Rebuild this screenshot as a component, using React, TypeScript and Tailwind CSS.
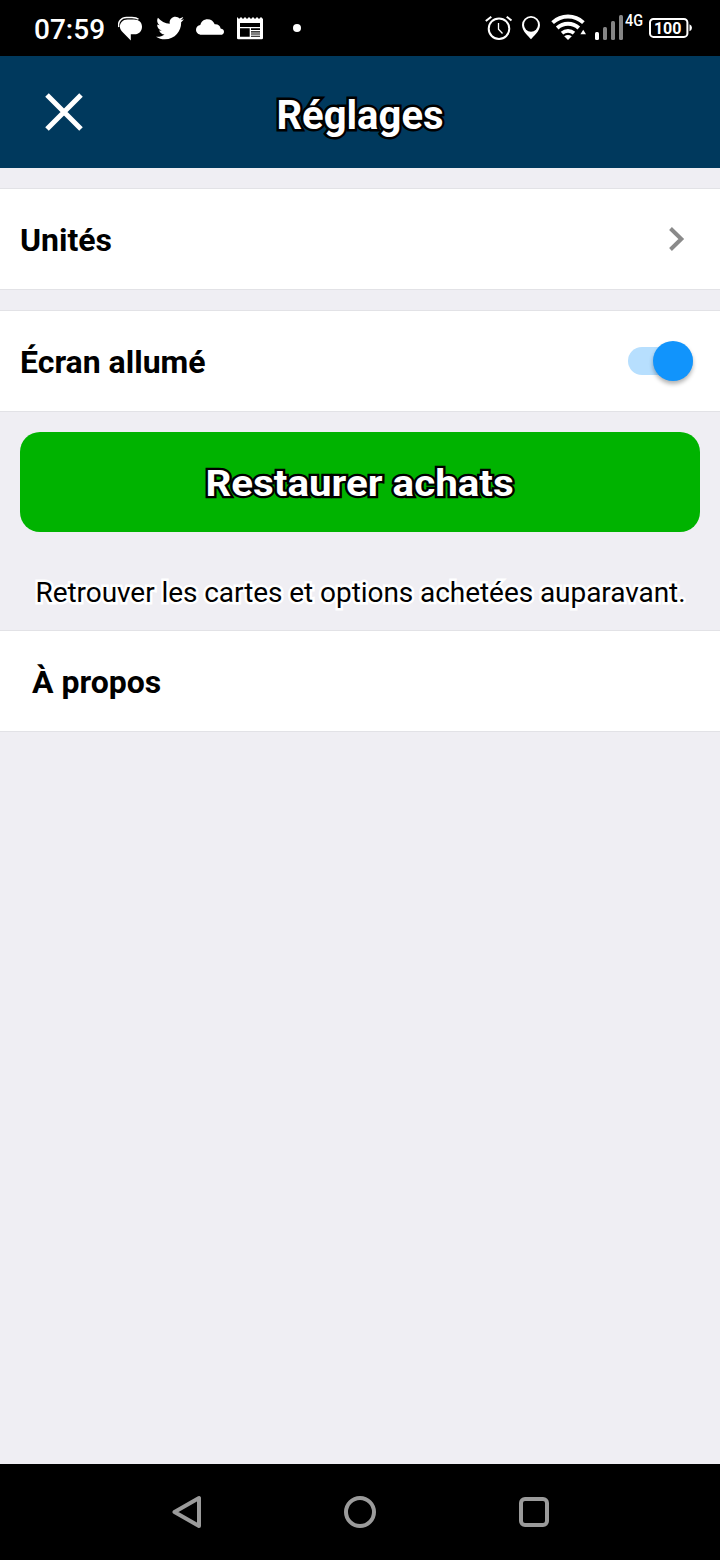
import type { ReactElement, ReactNode } from "react";
import { FaTwitter } from "react-icons/fa";

type RowProps = {
  label: string;
  className?: string;
  children?: ReactNode;
};

const StatusBar = (): ReactElement => {
  return (
    <div className="flex h-14 shrink-0 items-center bg-black text-white">
      <span className="ml-[34px] w-[84px] pt-[3px] text-[28px] leading-8 font-medium">
        07:59
      </span>
      {/* Messages */}
      <svg className="h-14 w-6 shrink-0" viewBox="118 0 24 56" fill="currentColor">
        <path d="M118.800 27C117.500 21.500 121.500 17.500 126.500 17.500H132C135.500 17.500 137 18 138.500 19.300" fill="none" stroke="currentColor" strokeWidth="1.500" />
        <path d="M127.500 19.500H134C139 19.500 142 22.500 142 26.700C142 31 139 34.300 134.500 34.300H130.800V40.500L122 31.600C117.500 27 120.500 19.500 127.500 19.500Z" />
      </svg>
      <FaTwitter className="ml-[14px] h-[28px] w-[28px] shrink-0" preserveAspectRatio="none" />
      {/* Cloud */}
      <svg className="ml-[12px] h-14 w-7 shrink-0" viewBox="196 0 28 56" fill="currentColor">
        <path d="M201.500 34.800C198.300 34.800 196 32.600 196 29.800C196 27.200 197.900 25.300 200.300 24.900C201.300 21.300 204 19.200 207.500 19.200C211 19.200 213.500 21 214.700 24.300C218 24 220.300 25.800 220.600 28.500C222.700 28.900 224 30 224 31.700C224 33.600 222.700 34.800 220.500 34.800Z" />
      </svg>
      {/* News */}
      <svg className="ml-[13px] h-14 w-[26px] shrink-0" viewBox="237 0 26 56">
        <path d="M237 17L239 19L241 17L243 19L245 17L247 19L249 17L251 19L253 17L255 19L257 17L259 19L261 17L263 19V38Q263 39.300 261.700 39.300H238.300Q237 39.300 237 38Z" fill="#fff" />
        <path d="M240 23H260V27H240ZM240 28.200H249.700V36.800H240ZM251 28.300H260V30H251ZM251 31.200H260V32.400H251ZM251 33.500H260V34.600H251ZM251 35.700H260V36.800H251Z" fill="#000" />
      </svg>
      <span className="ml-[30px] size-2 rounded-full bg-white" />

      <div className="mr-7 ml-auto flex items-center">
        {/* Alarm */}
        <svg className="h-14 w-7" viewBox="485 0 28 56" fill="none" stroke="currentColor">
          <circle cx="499" cy="28.700" r="10.300" strokeWidth="2" />
          <path d="M498.500 23V29.300L502.500 33.500" strokeWidth="1.300" />
          <path d="M485.800 21L491.300 16.700M506.700 16.700L511.500 20.500" strokeWidth="2" />
        </svg>
        {/* Location */}
        <svg className="ml-[9px] h-14 w-[18px]" viewBox="522 0 18 56">
          <path d="M531 39.300C529 36.500 522 31.500 522 25A9 9 0 0 1 540 25C540 31.500 533 36.500 531 39.300Z" fill="#fff" />
          <circle cx="531" cy="24.800" r="7" fill="#000" />
        </svg>
        {/* Wifi */}
        <svg className="ml-[11px] h-14 w-[35px]" viewBox="551 0 35 56" fill="none" stroke="currentColor" strokeWidth="3.800">
          <path d="M552.600 22.600A22.500 22.500 0 0 1 583.400 22.600" />
          <path d="M557.200 28A15.800 15.800 0 0 1 578.800 28" />
          <path d="M562 33.200A9 9 0 0 1 574 33.200" strokeWidth="3.600" />
          <path d="M568 40L564.200 36.200Q568 33.600 571.800 36.200Z" fill="currentColor" stroke="none" />
          <path d="M583.200 29.700L586 34.300H580.400Z" fill="currentColor" stroke="none" />
        </svg>
        {/* Mobile network */}
        <svg className="ml-[9px] h-14 w-[28px]" viewBox="595 0 28 56">
          <rect x="595" y="32" width="4" height="8" rx="1.500" fill="#fff" />
          <rect x="603" y="27" width="4" height="13" rx="1.500" fill="#858585" />
          <rect x="611" y="21" width="4" height="19" rx="1.500" fill="#858585" />
          <rect x="619" y="15" width="4" height="25" rx="1.500" fill="#858585" />
        </svg>
        <span className="mb-[17px] ml-[1.500px] w-[24.500px] origin-left scale-x-[0.85] text-[17px] leading-5 font-medium">
          4G
        </span>
        {/* Battery */}
        <svg className="h-14 w-[43px]" viewBox="649 0 43 56">
          <rect x="650" y="18.900" width="37.400" height="18" rx="3.500" fill="none" stroke="#fff" strokeWidth="2" />
          <path d="M689.500 24.300Q692 25.500 692 27.800Q692 30.200 689.500 31.300Z" fill="#fff" />
          <text x="667.700" y="34" fontSize="16" fontWeight="700" fill="#fff" textAnchor="middle">
            100
          </text>
        </svg>
      </div>
    </div>
  );
};

const Row = ({ label, className = "pl-5", children }: RowProps): ReactElement => {
  return (
    <div className={`flex h-[102px] items-center justify-between border-y border-[#e2e2e6] bg-white ${className}`}>
      <span className="pt-0.5 text-[32px] leading-10 font-bold">{label}</span>
      {children}
    </div>
  );
};

const Switch = (): ReactElement => {
  return (
    <button type="button" role="switch" aria-checked="true" className="mr-[27px] flex h-10 w-[65px] items-center">
      <span className="flex h-7 w-[65px] items-center justify-end rounded-full bg-[#b7dffe]">
        <span className="size-10 shrink-0 rounded-full bg-[#1194fc] shadow-[0_3px_4px_rgba(0,0,0,0.3)]" />
      </span>
    </button>
  );
};

const NavigationBar = (): ReactElement => {
  return (
    <div className="flex h-24 shrink-0 items-center gap-[142px] bg-black pl-[170px]">
      <svg className="h-9 w-8" viewBox="170 1494 32 36" fill="none" stroke="#9b9b9b" strokeWidth="4" strokeLinejoin="round">
        <path d="M199 1498V1526L174.500 1512Z" />
      </svg>
      <span className="size-8 rounded-full border-4 border-[#9b9b9b]" />
      <span className="ml-px size-[30px] rounded-[6px] border-4 border-[#9b9b9b]" />
    </div>
  );
};

const App = (): ReactElement => {
  return (
    <div className="flex h-[1560px] w-[720px] flex-col overflow-hidden bg-[#efeef3] font-[Roboto,sans-serif] text-black">
      <StatusBar />

      <header className="grid h-28 shrink-0 grid-cols-[128px_1fr_128px] items-center bg-[#00395d]">
        <button type="button" aria-label="Fermer" className="flex justify-center">
          <svg className="size-[38px]" viewBox="0 0 38 38" stroke="#fff" strokeWidth="5">
            <path d="M2 2L36 36M36 2L2 36" />
          </svg>
        </button>
        <h1 className="pt-2 text-center text-[40px] leading-12 font-bold text-white [-webkit-text-stroke:5px_#000] [paint-order:stroke_fill] [stroke-linejoin:round]">
          Réglages
        </h1>
      </header>

      <main className="flex flex-1 flex-col pt-5">
        <Row label="Unités">
          <svg className="mr-[35px] h-6 w-4" viewBox="0 0 16 24" fill="none" stroke="#8a8a8a" strokeWidth="4">
            <path d="M1.500 1.500L12.300 12L1.500 22.500" />
          </svg>
        </Row>

        <div className="mt-5">
          <Row label="Écran allumé">
            <Switch />
          </Row>
        </div>

        <button
          type="button"
          className="mx-5 mt-5 h-[100px] rounded-[20px] bg-[#00b300] pt-1 text-[36px] font-bold text-white [-webkit-text-stroke:4.500px_#000] [paint-order:stroke_fill] [stroke-linejoin:round]"
        >
          <span className="inline-block scale-x-[1.12]">Restaurer achats</span>
        </button>

        <p className="mt-[41px] mb-[17px] pl-px text-center text-[28px] leading-10 tracking-[-0.06px] whitespace-nowrap [-webkit-text-stroke:5px_#fff] [paint-order:stroke_fill] [stroke-linejoin:round]">
          Retrouver les cartes et options achetées auparavant.
        </p>

        <Row label="À propos" className="pl-8" />
      </main>

      <NavigationBar />
    </div>
  );
};

export default App;
